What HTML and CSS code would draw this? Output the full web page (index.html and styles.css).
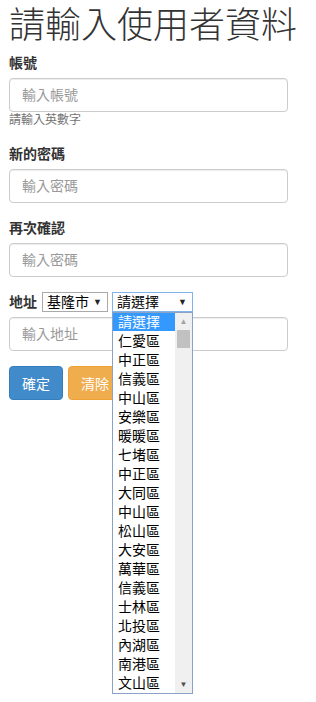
FILE: index.html
```html
<!DOCTYPE html>
<html lang="zh-Hant">
<head>
  <meta charset="UTF-8">
  <meta name="viewport" content="width=device-width, initial-scale=1.0">
  <title>使用者資料</title>
  <link rel="stylesheet" href="styles.css">
</head>
<body>

<div class="container">
  <h1 class="title">請輸入使用者資料</h1>

  <form>
    <div class="form-group">
      <label>帳號</label>
      <input type="text" class="form-control" placeholder="輸入帳號">
      <p class="help-block">請輸入英數字</p>
    </div>

    <div class="form-group">
      <label>新的密碼</label>
      <input type="password" class="form-control" placeholder="輸入密碼">
    </div>

    <div class="form-group">
      <label>再次確認</label>
      <input type="password" class="form-control" placeholder="輸入密碼">
    </div>

    <div class="form-group">
      <div class="address-row">
        <label>地址</label>
        <div class="fake-select city">基隆市<span class="arrow">▼</span></div>
        <div class="select-wrap">
          <div class="fake-select district">請選擇<span class="arrow">▼</span></div>
          <div class="dropdown">
            <ul class="options" id="districtList"></ul>
            <div class="scrollbar">
              <span class="scroll-up">▲</span>
              <span class="thumb"></span>
              <span class="scroll-down">▼</span>
            </div>
          </div>
        </div>
      </div>
      <input type="text" class="form-control" placeholder="輸入地址">
    </div>

    <div class="actions">
      <button type="button" class="btn btn-primary">確定</button>
      <button type="reset" class="btn btn-warning">清除</button>
    </div>
  </form>
</div>

<script>
  const districts = ["請選擇", "仁愛區", "中正區", "信義區", "中山區", "安樂區", "暖暖區", "七堵區",
    "中正區", "大同區", "中山區", "松山區", "大安區", "萬華區", "信義區", "士林區",
    "北投區", "內湖區", "南港區", "文山區"];

  const list = document.getElementById("districtList");
  districts.forEach((name, i) => {
    const li = document.createElement("li");
    li.textContent = name;
    if (i === 0) li.className = "selected";
    list.appendChild(li);
  });
</script>

</body>
</html>
```

FILE: styles.css
```css
* {
  box-sizing: border-box;
  margin: 0;
  padding: 0;
}

html,
body {
  min-height: 100%;
}

body {
  font-family: "Liberation Sans", "Noto Sans CJK TC", sans-serif;
  font-size: 14px;
  line-height: 20px;
  color: #333;
  background-color: #fff;
  min-height: 702px;
}

.container {
  padding: 6px 0 0 9px;
  min-height: 702px;
}

.title {
  font-size: 36px;
  line-height: 40px;
  font-weight: 300;
  margin-bottom: 7px;
}

.form-group {
  margin-bottom: 15px;
  width: 279px;
}

.form-group label {
  display: block;
  font-weight: bold;
  margin-bottom: 5px;
}

.form-control {
  display: block;
  width: 279px;
  height: 34px;
  padding: 6px 12px;
  font-family: inherit;
  font-size: 14px;
  color: #555;
  border: 1px solid #ccc;
  border-radius: 4px;
  box-shadow: inset 0 1px 1px rgba(0,0,0,0.075);
}

.form-control::placeholder {
  color: #999;
}

.help-block {
  font-size: 12px;
  line-height: 17px;
  color: #737373;
}

.address-row {
  display: flex;
  align-items: center;
  height: 20px;
  margin-bottom: 5px;
}

.address-row label {
  margin: 0 5px 0 0;
  line-height: 20px;
}

.fake-select {
  display: flex;
  align-items: center;
  justify-content: space-between;
  height: 20px;
  padding: 0 5px 0 4px;
  border: 1px solid #a9a9a9;
  background-color: #fff;
  color: #000;
  font-size: 14px;
  line-height: 18px;
}

.fake-select .arrow {
  font-size: 9px;
  color: #222;
}

.city {
  width: 66px;
  margin-right: 4px;
}

.select-wrap {
  position: relative;
}

.district {
  width: 81px;
  border-color: #7eb4ea;
}

.dropdown {
  position: absolute;
  top: 100%;
  left: 0;
  z-index: 10;
  display: flex;
  width: 81px;
  height: 382px;
  border: 1px solid #8aa2c6;
  background-color: #fff;
}

.options {
  flex: 1;
  list-style: none;
}

.options li {
  height: 19px;
  line-height: 19px;
  padding-left: 5px;
  font-size: 14px;
  color: #000;
}

.options li.selected {
  background-color: #3399ff;
  color: #fff;
  height: 18px;
  line-height: 18px;
  margin-bottom: 1px;
}

.scrollbar {
  position: relative;
  width: 17px;
  background-color: #f0f0f0;
}

.scroll-up,
.scroll-down {
  position: absolute;
  left: 0;
  width: 17px;
  text-align: center;
  font-size: 8px;
  line-height: 17px;
}

.scroll-up {
  top: 0;
  color: #a3a3a3;
}

.scroll-down {
  bottom: 0;
  color: #505050;
}

.thumb {
  position: absolute;
  top: 17px;
  left: 2px;
  width: 13px;
  height: 18px;
  background-color: #c1c1c1;
}

.actions {
  display: flex;
  gap: 5px;
}

.btn {
  width: 54px;
  height: 34px;
  font-family: inherit;
  font-size: 14px;
  color: #fff;
  border: 1px solid transparent;
  border-radius: 4px;
  cursor: pointer;
}

.btn-primary {
  background-color: #428bca;
  border-color: #357ebd;
}

.btn-warning {
  background-color: #f0ad4e;
  border-color: #eea236;
}
```
